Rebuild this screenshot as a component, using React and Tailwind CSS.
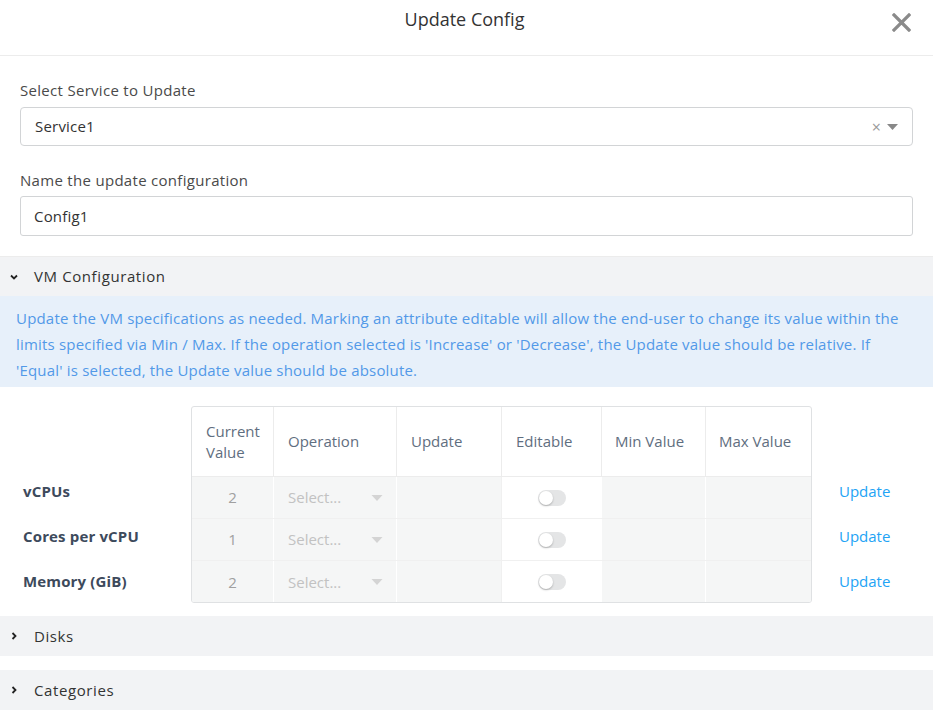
import React from "react";

const font = { fontFamily: "'Open Sans', Lato, sans-serif" };

function ChevronDown() {
  return (
    <svg width="10" height="8" viewBox="0 0 10 8" className="shrink-0">
      <polyline points="2,2.5 5,5.5 8,2.5" fill="none" stroke="#222" strokeWidth="1.8" />
    </svg>
  );
}
function ChevronRight() {
  return (
    <svg width="10" height="10" viewBox="0 0 10 10" className="shrink-0">
      <polyline points="3.5,2 6.5,5 3.5,8" fill="none" stroke="#222" strokeWidth="1.8" />
    </svg>
  );
}
function Caret({ color = "#888", w = 11, h = 6 }) {
  return (
    <svg width={w} height={h} viewBox="0 0 11 6" className="shrink-0">
      <polygon points="0,0 11,0 5.5,6" fill={color} />
    </svg>
  );
}
function Toggle() {
  return (
    <div className="relative w-[28px] h-[16px] rounded-full bg-[#e4e5e6]">
      <div className="absolute left-[1px] top-[1px] w-[14px] h-[14px] rounded-full bg-white shadow-[0_1px_2px_rgba(0,0,0,0.25)]" />
    </div>
  );
}

const rows = [
  { label: "vCPUs", value: "2" },
  { label: "Cores per vCPU", value: "1" },
  { label: "Memory (GiB)", value: "2" },
];

export default function App() {
  return (
    <div className="w-[933px] h-[723px] bg-white overflow-hidden" style={font}>
      {/* Header */}
      <div className="relative h-[56px] border-b border-[#ececec] flex items-center justify-center">
        <div className="text-[18px] text-[#333] -mt-[16px] -ml-[4px]">Update Config</div>
        <svg className="absolute right-[22px] top-[13px]" width="19" height="19" viewBox="0 0 19 19">
          <path d="M2 2 L17 17 M17 2 L2 17" stroke="#8a8a8a" strokeWidth="3.2" strokeLinecap="square" />
        </svg>
      </div>

      {/* Form */}
      <div className="px-[20px] pt-[24px] pb-[20px]">
        <div className="text-[15px] tracking-[0.3px] text-[#4a4a4a] leading-[20px]">Select Service to Update</div>
        <div className="mt-[7px] h-[39px] border border-[#d2d4d6] rounded-[4px] flex items-center pl-[14px] pr-[14px]">
          <span className="text-[15px] tracking-[0.2px] text-[#333] flex-1">Service1</span>
          <span className="text-[16px] text-[#999] mr-[6px] leading-none">×</span>
          <Caret color="#888" />
        </div>
        <div className="mt-[24px] text-[15px] tracking-[0.3px] text-[#4a4a4a] leading-[20px]">Name the update configuration</div>
        <div className="mt-[6px] h-[40px] border border-[#d2d4d6] rounded-[3px] flex items-center pl-[13px]">
          <span className="text-[15px] tracking-[0.2px] text-[#333]">Config1</span>
        </div>
      </div>

      {/* VM Configuration section */}
      <div className="border-t border-[#ececec] h-[40px] bg-[#f2f3f5] flex items-center pl-[9px] gap-[15px]">
        <ChevronDown />
        <span className="text-[15px] tracking-[0.6px] text-[#333]">VM Configuration</span>
      </div>
      <div className="bg-[#e7f0fa] px-[16px] pt-[9px] pb-[8px] h-[91px] text-[15px] tracking-[0.19px] leading-[26px] text-[#5299e8]">
        Update the VM specifications as needed. Marking an attribute editable will allow the end-user to change its value within the limits specified via Min / Max. If the operation selected is 'Increase' or 'Decrease', the Update value should be relative. If 'Equal' is selected, the Update value should be absolute.
      </div>

      {/* Table area */}
      <div className="flex pt-[19px] h-[230px]">
        <div className="w-[191px] pl-[23px] pt-[63px]">
          {rows.map((r) => (
            <div key={r.label} className="h-[45px] flex items-center text-[15px] tracking-[0.15px] font-bold text-[#3d4a5c]">
              {r.label}
            </div>
          ))}
        </div>
        <div className="w-[621px] h-[197px] border border-[#dfe1e3] rounded-[3px] overflow-hidden">
          <div className="grid grid-cols-[82px_123px_105px_100px_104px_105px] h-[70px] border-b border-[#ececec] text-[15px] text-[#5f6e80]">
            <div className="border-r border-[#ececec] flex items-center pl-[14px] leading-[21px]">Current<br />Value</div>
            <div className="border-r border-[#ececec] flex items-center pl-[14px]">Operation</div>
            <div className="border-r border-[#ececec] flex items-center pl-[14px]">Update</div>
            <div className="border-r border-[#ececec] flex items-center pl-[14px]">Editable</div>
            <div className="border-r border-[#ececec] flex items-center pl-[13px]">Min Value</div>
            <div className="flex items-center pl-[13px]">Max Value</div>
          </div>
          {rows.map((r, i) => (
            <div
              key={r.label}
              className={
                "grid grid-cols-[82px_123px_105px_100px_104px_105px] h-[42px] text-[15px] " +
                (i < 2 ? "border-b border-[#f0f0f0]" : "")
              }
            >
              <div className="bg-[#f5f6f6] border-r border-white flex items-center justify-center text-[#a0a0a0]">{r.value}</div>
              <div className="bg-[#f5f6f6] border-r border-white flex items-center pl-[14px] pr-[13px] text-[#c2c2c2]">
                <span className="flex-1">Select...</span>
                <Caret color="#d4d4d4" w={12} h={6} />
              </div>
              <div className="bg-[#f5f6f6] border-r border-[#f0f0f0]" />
              <div className="bg-white flex items-center justify-center">
                <Toggle />
              </div>
              <div className="bg-[#f5f6f6] border-r border-white" />
              <div className="bg-[#f5f6f6]" />
            </div>
          ))}
        </div>
        <div className="pl-[27px] pt-[63px]">
          {rows.map((r) => (
            <div key={r.label} className="h-[45px] flex items-center text-[15px] text-[#22a3f5]">
              Update
            </div>
          ))}
        </div>
      </div>

      {/* Disks */}
      <div className="mt-[-1px] h-[40px] bg-[#f2f3f5] flex items-center pl-[9px] gap-[15px]">
        <ChevronRight />
        <span className="text-[15px] tracking-[0.6px] text-[#333]">Disks</span>
      </div>
      <div className="mt-[14px] h-[40px] bg-[#f2f3f5] flex items-center pl-[9px] gap-[15px]">
        <ChevronRight />
        <span className="text-[15px] tracking-[0.6px] text-[#333]">Categories</span>
      </div>
    </div>
  );
}
